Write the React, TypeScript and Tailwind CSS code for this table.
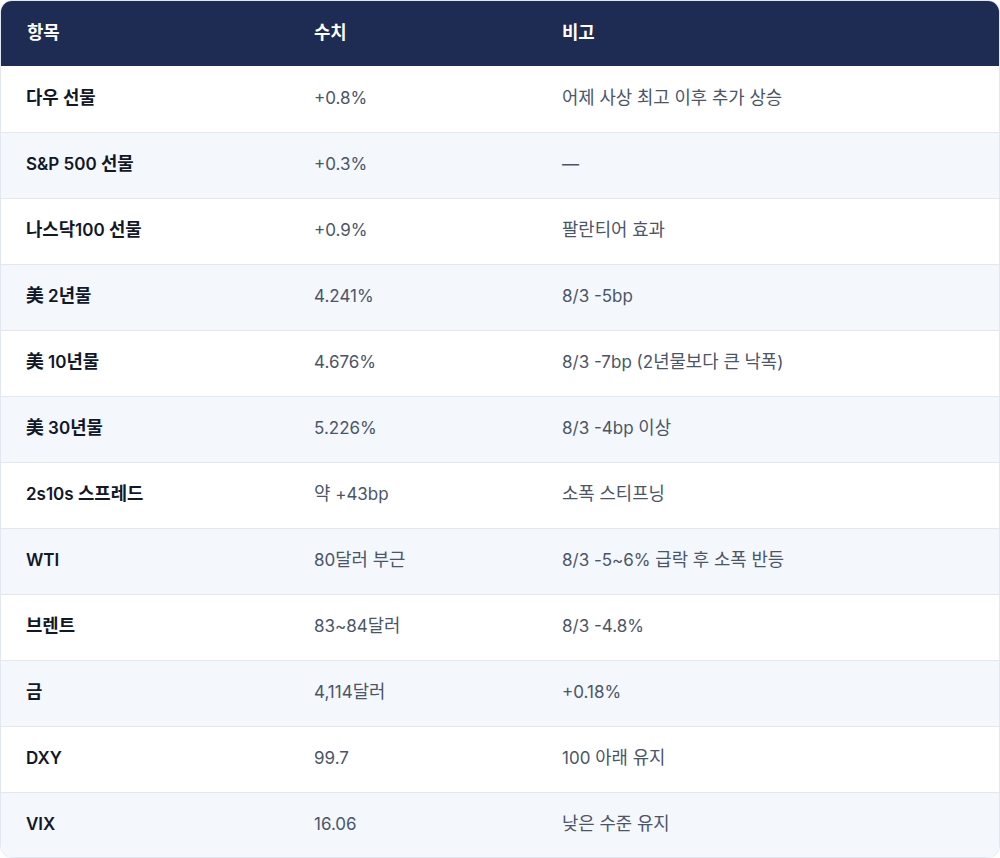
const rows: [string, string, string][] = [
  ['다우 선물', '+0.8%', '어제 사상 최고 이후 추가 상승'],
  ['S&P 500 선물', '+0.3%', '—'],
  ['나스닥100 선물', '+0.9%', '팔란티어 효과'],
  ['美 2년물', '4.241%', '8/3 -5bp'],
  ['美 10년물', '4.676%', '8/3 -7bp (2년물보다 큰 낙폭)'],
  ['美 30년물', '5.226%', '8/3 -4bp 이상'],
  ['2s10s 스프레드', '약 +43bp', '소폭 스티프닝'],
  ['WTI', '80달러 부근', '8/3 -5~6% 급락 후 소폭 반등'],
  ['브렌트', '83~84달러', '8/3 -4.8%'],
  ['금', '4,114달러', '+0.18%'],
  ['DXY', '99.7', '100 아래 유지'],
  ['VIX', '16.06', '낮은 수준 유지'],
];

// hangul runs render a touch larger than the latin text
const Txt = ({ s }: { s: string }) => (
  <>
    {s.split(/([\uac00-\ud7a3\u7f8e]+)/).map((part, i) =>
      i % 2 === 1 ? (
        <span key={i} className="text-[17.8px]">
          {part}
        </span>
      ) : (
        part
      ),
    )}
  </>
);

export default function App() {
  return (
    <div className="w-[1000px] h-[858px] bg-white font-['Inter','Noto_Sans_CJK_KR',sans-serif] text-[17px] leading-6">
      <div className="h-full rounded-xl border border-[#e2e8f2] overflow-hidden">
        <div className="grid grid-cols-[287px_248px_1fr] h-[65px] items-center bg-[#1e2b53] text-white font-semibold">
          <div className="px-[26px] pb-0.5"><Txt s="항목" /></div>
          <div className="px-[26px] pb-0.5"><Txt s="수치" /></div>
          <div className="px-[26px] pb-0.5"><Txt s="비고" /></div>
        </div>
        {rows.map((r, i) => (
          <div
            key={r[0]}
            className={`grid grid-cols-[287px_248px_1fr] h-[66px] items-center pb-[3px] ${i > 0 ? 'border-t border-[#e2e8f2]' : 'pt-px'} ${i % 2 === 1 ? 'bg-[#f4f7fc]' : 'bg-white'}`}
          >
            <div className="pl-[25px] pr-[26px] font-semibold text-[#111827]"><Txt s={r[0]} /></div>
            <div className="px-[26px] text-[#4b5568]"><Txt s={r[1]} /></div>
            <div className="px-[26px] text-[#4b5568]"><Txt s={r[2]} /></div>
          </div>
        ))}
      </div>
    </div>
  );
}
